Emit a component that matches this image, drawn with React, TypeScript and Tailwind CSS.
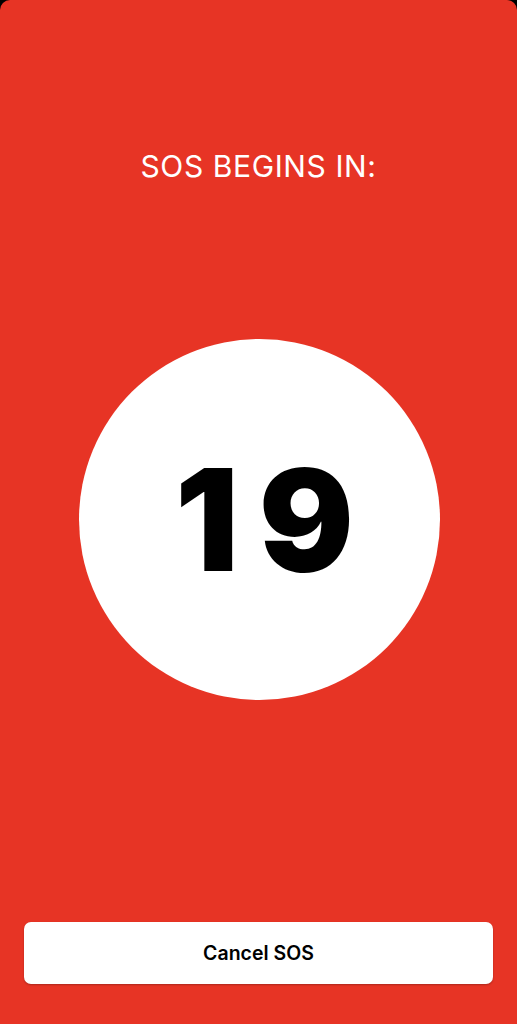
export default function App() {
  return (
    <div className="bg-black">
      <div
        className="flex h-[1024px] w-full flex-col items-center rounded-t-[10px] bg-[#e73425]"
        style={{ fontFamily: "Inter, 'Liberation Sans', sans-serif" }}
      >
        {/* Title */}
        <h1 className="mt-[148px] text-[30px] font-normal leading-[36px] tracking-[0.6px] text-white">
          SOS BEGINS IN:
        </h1>

        {/* Countdown */}
        <div className="mt-[155px] ml-[1px] flex h-[361px] w-[361px] items-center justify-center rounded-full bg-white">
          <span className="pl-[31px] text-[141px] font-black leading-none tracking-[20px] text-black">19</span>
        </div>

        {/* Cancel button */}
        <div className="mt-auto mb-[40px] w-full px-[24px]">
          <button className="flex h-[62px] w-full items-center justify-center rounded-[7px] bg-white pt-[2px] text-[19.5px] font-semibold text-black shadow-[0_1px_2px_rgba(0,0,0,0.25)]">
            Cancel SOS
          </button>
        </div>
      </div>
    </div>
  );
}
